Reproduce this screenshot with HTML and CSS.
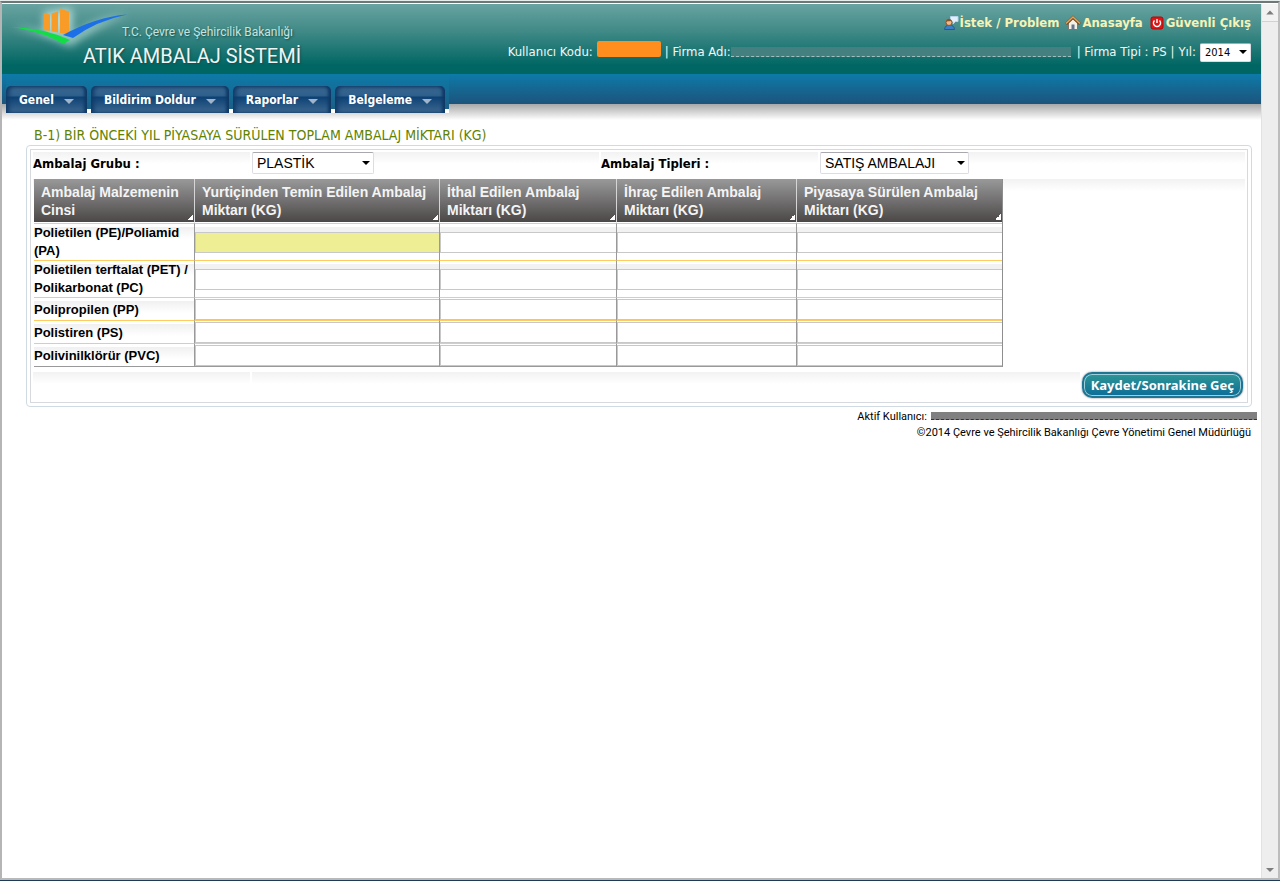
FILE: index.html
```
<!DOCTYPE html>
<html lang="tr">
<head>
<meta charset="utf-8">
<title>Atık Ambalaj Sistemi</title>
<link rel="stylesheet" href="styles.css">
</head>
<body>
<div class="window">
  <div class="page">
    <header class="top">
      <div class="brand">
        <svg class="brand-logo" viewBox="0 0 150 50" width="150" height="50" aria-hidden="true">
          <defs>
            <filter id="glow" x="-20%" y="-40%" width="140%" height="180%"><feGaussianBlur stdDeviation="4"/></filter>
          </defs>
          <g fill="#d5f3ee" opacity=".75" filter="url(#glow)">
            <path d="M5 22Q35 24 63 35Q85 16 122 10Q90 22 64 42Q40 30 5 22Z"/>
            <path d="M38 8L66 4V32L38 27Z"/>
          </g>
          <path fill="#f99b27" d="M38 9l6 1.500v16.500l-6-1zM45.500 9.500l6.500-2v21l-6.500-1zM54 4.500l9 3v23l-9-1.500z"/>
          <path fill="#12dd45" d="M5 23Q38 24 64 36L57 40Q38 28 5 23Z"/>
          <path fill="#1d6fe8" d="M121 10.500Q90 13 57 31L67 34Q90 17 121 10.500Z"/>
        </svg>
        <div class="brand-text">
          <span class="brand-ministry">T.C. Çevre ve Şehircilik Bakanlığı</span>
          <strong class="brand-name">ATIK AMBALAJ SİSTEMİ</strong>
        </div>
      </div>
      <div class="top-side">
        <nav class="quick">
          <a class="quick-link" href="#">
            <svg viewBox="0 0 16 16" width="16" height="16" aria-hidden="true">
              <path fill="#e4effb" stroke="#b7d3ee" d="M7.500 1.500h7.500v5h-2.500l-2.500 2.500v-2.500h-2.500z"/>
              <path fill="#3c7fc4" stroke="#245a93" d="M1.500 14.500q.5-4.500 5-4.500t5 4.500z"/>
              <circle cx="6" cy="7.500" r="3" fill="#f2b988" stroke="#8a5427"/>
              <path fill="#8a5427" d="M3 6.500q1-3.500 4-2.500l1.500 2z"/>
            </svg><span>İstek / Problem</span></a>
          <a class="quick-link" href="#">
            <svg viewBox="0 0 16 16" width="16" height="16" aria-hidden="true">
              <path fill="#f3f0e6" stroke="#7c7768" d="M3.500 7.500L8 3.500l4.500 4v7h-9z"/>
              <path fill="none" stroke="#7b4a22" stroke-width="3" d="M1 9L8 2.500L15 9"/>
              <path fill="none" stroke="#dba45c" stroke-width="1.500" d="M1 8.500L8 2L15 8.500"/>
              <path fill="#66758c" d="M6.500 9.500h3v5h-3z"/>
            </svg><span>Anasayfa</span></a>
          <a class="quick-link" href="#">
            <svg viewBox="0 0 16 16" width="16" height="16" aria-hidden="true">
              <rect x="2" y="2" width="12" height="12" rx="2" fill="#e01515" stroke="#b30808"/>
              <path fill="none" stroke="#fff" stroke-width="1.500" d="M5.500 5.500a3.500 3.500 0 1 0 5 0M8 4v4"/>
            </svg><span>Güvenli Çıkış</span></a>
        </nav>
        <div class="account">
          <span>Kullanıcı Kodu:</span>
          <span class="mask mask-code"></span>
          <span>| Firma Adı:</span>
          <span class="mask mask-firm"></span>
          <span>| Firma Tipi : PS |</span>
          <label for="yil">Yıl:</label>
          <span class="pick pick-year"><select id="yil"><option>2014</option></select></span>
        </div>
      </div>
    </header>

    <nav class="menu">
      <div class="menu-tabs">
        <button class="menu-tab" type="button">Genel</button>
        <button class="menu-tab" type="button">Bildirim Doldur</button>
        <button class="menu-tab" type="button">Raporlar</button>
        <button class="menu-tab" type="button">Belgeleme</button>
      </div>
    </nav>

    <main class="content">
      <h1 class="title">B-1) BİR ÖNCEKİ YIL PİYASAYA SÜRÜLEN TOPLAM AMBALAJ MİKTARI (KG)</h1>
      <form class="panel">
        <div class="panel-in">
          <div class="filters">
            <label class="shade" for="grup">Ambalaj Grubu :</label>
            <div class="shade"><span class="pick pick-group"><select id="grup"><option>PLASTİK</option></select></span></div>
            <label class="shade" for="tip">Ambalaj Tipleri :</label>
            <div class="shade"><span class="pick pick-type"><select id="tip"><option>SATIŞ AMBALAJI</option></select></span></div>
          </div>
          <div class="table-area shade">
            <table class="amounts">
              <colgroup><col class="c1"><col class="c2"><col class="c3"><col class="c4"><col class="c5"></colgroup>
              <thead>
                <tr>
                  <th scope="col">Ambalaj Malzemenin Cinsi</th>
                  <th scope="col">Yurtiçinden Temin Edilen Ambalaj Miktarı (KG)</th>
                  <th scope="col">İthal Edilen Ambalaj Miktarı (KG)</th>
                  <th scope="col">İhraç Edilen Ambalaj Miktarı (KG)</th>
                  <th scope="col">Piyasaya Sürülen Ambalaj Miktarı (KG)</th>
                </tr>
              </thead>
              <tbody>
                <tr class="tall"><th scope="row">Polietilen (PE)/Poliamid (PA)</th>
                  <td><input class="current" aria-label="PE/PA yurtiçi"></td><td><input aria-label="PE/PA ithal"></td><td><input aria-label="PE/PA ihraç"></td><td><input aria-label="PE/PA piyasa"></td></tr>
                <tr class="tall"><th scope="row">Polietilen terftalat (PET) / Polikarbonat (PC)</th>
                  <td><input aria-label="PET/PC yurtiçi"></td><td><input aria-label="PET/PC ithal"></td><td><input aria-label="PET/PC ihraç"></td><td><input aria-label="PET/PC piyasa"></td></tr>
                <tr><th scope="row">Polipropilen (PP)</th>
                  <td><input aria-label="PP yurtiçi"></td><td><input aria-label="PP ithal"></td><td><input aria-label="PP ihraç"></td><td><input aria-label="PP piyasa"></td></tr>
                <tr><th scope="row">Polistiren (PS)</th>
                  <td><input aria-label="PS yurtiçi"></td><td><input aria-label="PS ithal"></td><td><input aria-label="PS ihraç"></td><td><input aria-label="PS piyasa"></td></tr>
                <tr><th scope="row">Polivinilklörür (PVC)</th>
                  <td><input aria-label="PVC yurtiçi"></td><td><input aria-label="PVC ithal"></td><td><input aria-label="PVC ihraç"></td><td><input aria-label="PVC piyasa"></td></tr>
              </tbody>
            </table>
          </div>
          <div class="actions">
            <span class="shade"></span>
            <span class="shade"></span>
            <button class="save" type="button">Kaydet/Sonrakine Geç</button>
          </div>
        </div>
      </form>
      <footer class="foot">
        <div class="foot-user"><span>Aktif Kullanıcı:</span><span class="mask mask-user"></span></div>
        <div class="foot-copy">©2014 Çevre ve Şehircilik Bakanlığı Çevre Yönetimi Genel Müdürlüğü</div>
      </footer>
    </main>
  </div>
  <div class="scroll" aria-hidden="true">
    <svg class="scroll-up" width="16" height="18" viewBox="0 0 16 18"><path fill="#7d7d7d" d="M4 11l4-4 4 4z"/></svg>
    <svg class="scroll-down" width="16" height="18" viewBox="0 0 16 18"><path fill="#7d7d7d" d="M4 8l4 4 4-4z"/></svg>
  </div>
</div>
</body>
</html>
```
FILE: styles.css
```
* { box-sizing: border-box; }

body {
  margin: 0;
  font: 12px/16px "DejaVu Sans Condensed", "DejaVu Sans", sans-serif;
  color: #000;
  background: #1f3a55;
  border-top: 1px solid #e4ecec;
  border-bottom: 1px solid #1f3a55;
}

.window {
  display: flex;
  min-height: calc(100vh - 2px);
  padding-top: 1px;
  border-top: 2px solid #6f7676;
  border-left: 2px solid #b5b5b5;
  border-right: 2px solid #bdbdbd;
  border-bottom: 2px solid #b9b9bb;
  background: #fff;
}

.page { flex: 1; min-width: 0; }

.scroll {
  display: flex;
  flex-direction: column;
  justify-content: space-between;
  width: 17px;
  border-left: 1px solid #e2e2e2;
  background: #eee;
}
.scroll-up { border-bottom: 1px solid #d2d2d2; background: #f2f2f2; }

/* Header */
.top {
  display: flex;
  justify-content: space-between;
  height: 70px;
  background: linear-gradient(#68a3a0, #3f8986 40%, #006663 88%);
}
.brand { display: flex; padding-left: 4px; }
.brand-logo { flex: none; }
.brand-text {
  display: flex;
  flex-direction: column;
  align-items: flex-end;
  margin-left: -73px;
  padding-top: 20px;
  text-shadow: 1px 1px 2px #124f4c;
}
.brand-ministry { padding-right: 8px; font: 12px/16px Roboto, sans-serif; color: #c8e3df; }
.brand-name { font: 20px/32px Roboto, sans-serif; color: #f0f5f4; }

.top-side { display: flex; flex-direction: column; align-items: flex-end; padding-right: 10px; }
.quick { display: flex; gap: 6px; padding-top: 11px; }
.quick-link {
  display: flex;
  gap: 1px;
  align-items: center;
  font-size: 13px;
  font-weight: bold;
  color: #f7f3b5;
  text-decoration: none;
}
.account { display: flex; gap: 4px; align-items: center; padding-top: 10px; font-size: 13px; color: #f2f7f6; white-space: nowrap; }
.mask { display: block; flex: none; }
.mask-code { width: 64px; height: 16px; margin-bottom: 6px; border-radius: 2px; background: #ff8e1e; }
.mask-firm { width: 340px; height: 10px; margin: 0 2px 0 -4px; border-bottom: 1px dashed #9dc0be; background: #448080; }

.pick { position: relative; display: inline-block; }
.pick::after {
  content: "";
  position: absolute;
  right: 4px;
  top: 50%;
  margin-top: -2px;
  border: 4px solid transparent;
  border-top-color: #000;
  border-bottom: 0;
  pointer-events: none;
}
.pick select {
  display: block;
  width: 100%;
  height: 22px;
  padding: 0 4px;
  appearance: none;
  border: 1px solid #dcdce4;
  border-top-color: #a8a8ae;
  border-radius: 2px;
  background: #fff;
  font: 14px "Liberation Sans", sans-serif;
  color: #000;
}
.pick-year { width: 51px; }
.pick-year select { height: 19px; font: 11px "DejaVu Sans Condensed", sans-serif; }
.pick-group { width: 122px; }
.pick-type { width: 149px; }

/* Menu */
.menu {
  height: 46px;
  padding-left: 4px;
  background:
    linear-gradient(#0d7aa8, #1c547c) 0 0 / 100% 30px no-repeat,
    linear-gradient(#a8a8a8, #fff) 0 30px / 100% 16px no-repeat;
}
.menu-tabs {
  display: inline-flex;
  gap: 4px;
  height: 39px;
  padding: 12px 4px 0 0;
  background: linear-gradient(#0d7aa8, #1c5f86 35px, #fff 35px);
}
.menu-tab {
  display: flex;
  align-items: center;
  gap: 10px;
  padding: 0 13px;
  border: 0;
  border-radius: 5px 5px 0 0;
  background: linear-gradient(#3b6a92, #2f5f8c 35%, #0e4274 42%, #3d6891);
  box-shadow: inset 3px 1px 4px #103a68, inset -3px 0 3px #103a68;
  font: bold 12px/16px "DejaVu Sans Condensed", sans-serif;
  color: #fff;
}
.menu-tab::after {
  content: "";
  margin-top: 3px;
  border: 5px solid transparent;
  border-top-color: #a0b4cc;
  border-bottom: 0;
}

/* Form */
.content { padding: 7px 9px 0 24px; }
.title { margin: 0; padding: 0 8px; font-size: 14px; font-weight: normal; line-height: 16px; color: #618200; }
.panel { margin-top: 2px; padding: 3px; border: 1px solid #cfdae2; border-radius: 4px; }
.panel-in { padding: 2px; border: 1px solid #d6dadf; }
.shade { background: linear-gradient(#f2f2f2, #fff) 0 0 / 100% 12px no-repeat; }

.filters { display: grid; grid-template-columns: 217fr 347fr 217fr 425fr; gap: 2px; align-items: stretch; }
.filters label { font-size: 13px; font-weight: bold; line-height: 23px; }

.table-area { margin-top: 4px; padding-left: 1px; }
.amounts {
  width: 80%;
  table-layout: fixed;
  border-collapse: separate;
  border-spacing: 0;
  border-right: 1px solid #8e8e8e;
  border-bottom: 1px solid #999;
  font: bold 14px/18px "Liberation Sans", sans-serif;
}
.c1 { width: 160px; }
.c2 { width: 245px; }
.c3 { width: 177px; }
.c4 { width: 180px; }
.amounts th { text-align: left; font-weight: bold; }
.amounts thead th {
  height: 43px;
  padding: 4px 7px 3px;
  border-bottom: 1px solid #fff;
  background:
    linear-gradient(135deg, transparent 50%, #fff 50%) right 1px bottom 2px / 6px 6px no-repeat,
    linear-gradient(#999, #4b4747);
  color: #f4f4f4;
}
.amounts thead th + th { border-left: 1px solid #d5d5d5; }
.amounts tbody th { padding: 1px 0 0; font-size: 13px; background: linear-gradient(#f0f0f0, #fff) 0 3px / 100% 12px no-repeat; }
.amounts tbody th, .amounts tbody td { height: 23px; border-top: 1px solid #ffcb5e; }
.amounts tbody .tall > * { height: 37px; padding-top: 0; }
.amounts tbody td { padding: 0; border-left: 1px solid #999; background: linear-gradient(#f2f2f2, #f2f2f2) 0 3px / 100% 6px no-repeat; }
.amounts input {
  display: block;
  width: 100%;
  height: 21px;
  padding: 0 2px;
  border: 1px solid #c8c8c8;
  border-right: 0;
  border-radius: 0;
  background: #fff;
  font: 13px "Liberation Sans", sans-serif;
}
.amounts input.current { background: #eeee94; }

.actions { display: grid; grid-template-columns: 217fr 829fr auto; gap: 2px; padding: 5px 0 2px; }
.save {
  height: 26px;
  padding: 0 7px;
  margin-right: 2px;
  border: 2px solid #207593;
  border-radius: 10px;
  background: linear-gradient(#2f9694, #0b6d98);
  box-shadow: inset 0 0 0 1px #9cd0dc, 0 0 2px #777;
  font: bold 13px "Noto Sans", sans-serif;
  color: #fff;
}

.foot { display: flex; flex-direction: column; align-items: flex-end; padding-top: 2px; font: 11px/16px Roboto, sans-serif; }
.foot-user { display: flex; gap: 4px; }
.mask-user { width: 326px; height: 8px; margin: 3px -5px 0 0; border-bottom: 1px dashed #333; background: #808080; }
.foot-copy { padding-right: 1px; }
```
